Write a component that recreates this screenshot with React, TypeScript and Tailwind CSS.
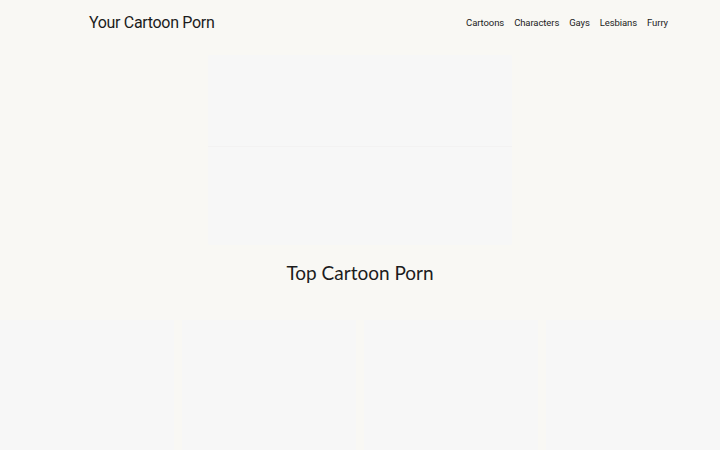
const navLinks = ["Cartoons", "Characters", "Gays", "Lesbians", "Furry"];

const topCards = [0, 1, 2, 3];

export default function App() {
  return (
    <main className="min-h-screen overflow-hidden bg-[#f9f8f4] font-['Roboto',sans-serif] text-[#1c1c1c]">
      <header className="flex h-[45px] items-center justify-between pl-[89px] pr-[52px]">
        <a href="/" className="text-[16px] leading-none tracking-[-0.02em]">
          Your Cartoon Porn
        </a>
        <nav className="flex items-center gap-[10px] pt-[1px] text-[9.5px] tracking-[-0.01em]">
          {navLinks.map((link) => (
            <a key={link} href="#" className="hover:underline">
              {link}
            </a>
          ))}
        </nav>
      </header>

      <section className="mt-[10px] flex justify-center">
        <div className="flex h-[190px] w-[304px] flex-col rounded-[2px] bg-[#f7f7f7]">
          <div className="h-[92px] border-b border-[#f3f2f2]" />
          <div className="flex-1" />
        </div>
      </section>

      <h1 className="mt-[15px] text-center font-['Lato',sans-serif] text-[19px] leading-[26px]">
        Top Cartoon Porn
      </h1>

      <section className="mt-[34px] grid grid-cols-4 gap-[8px]">
        {topCards.map((card) => (
          <div key={card} className="h-[140px] bg-[#f7f7f7]" />
        ))}
      </section>
    </main>
  );
}
